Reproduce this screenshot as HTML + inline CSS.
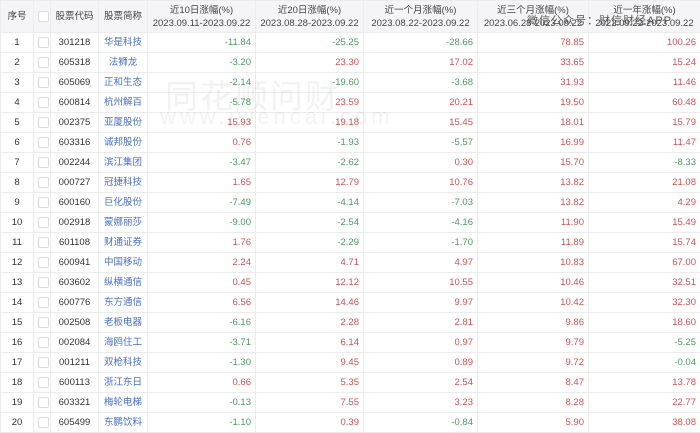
<!DOCTYPE html>
<html><head><meta charset="utf-8"><style>
body{margin:0;width:700px;height:433px;overflow:hidden;background:#fff;font-family:"Liberation Sans","Noto Sans CJK SC",sans-serif;position:relative}
table{border-collapse:collapse;table-layout:fixed;position:absolute;left:0;top:0;width:700px}
td,th{border:1px solid #ececec;font-size:9.5px;padding:0 4px;white-space:nowrap;overflow:hidden;vertical-align:middle}
th{background:#f5f5f7;color:#444;font-weight:normal;height:31px;line-height:13px;text-align:center}
td{height:19px;line-height:19px;color:#333;text-align:right}
td.c{text-align:center}
td.n{color:#4a6fc7;padding:0}
td.n div{height:19px;display:flex;align-items:center;justify-content:center;line-height:1}
.g{color:#4e9a5e}.r{color:#d45050}
.cb{display:inline-block;width:9px;height:9px;border:1px solid #ddd;border-radius:2px;vertical-align:middle;background:#fff}
td:nth-child(4),th:nth-child(4){box-shadow:3px 0 4px -2px rgba(0,0,0,.12)}
.wm{position:absolute;color:rgba(0,0,0,.05);pointer-events:none}
.ov{position:absolute;left:527px;top:12px;font-size:11px;color:#555;letter-spacing:1px}
</style></head><body>
<table>
<colgroup><col style="width:33px"><col style="width:17px"><col style="width:48px"><col style="width:49px"><col style="width:108px"><col style="width:108px"><col style="width:114px"><col style="width:111px"><col style="width:112px"></colgroup>
<tr><th>序号</th><th><span class="cb"></span></th><th>股票代码</th><th>股票简称</th><th>近10日涨幅(%)<br>2023.09.11-2023.09.22</th><th>近20日涨幅(%)<br>2023.08.28-2023.09.22</th><th>近一个月涨幅(%)<br>2023.08.22-2023.09.22</th><th>近三个月涨幅(%)<br>2023.06.28-2023.09.22</th><th>近一年涨幅(%)<br>2022.09.22-2023.09.22</th></tr>
<tr><td class="c">1</td><td class="c"><span class="cb"></span></td><td class="c">301218</td><td class="n"><div>华是科技</div></td><td class="g">-11.84</td><td class="g">-25.25</td><td class="g">-28.66</td><td class="r">78.85</td><td class="r">100.26</td></tr>
<tr><td class="c">2</td><td class="c"><span class="cb"></span></td><td class="c">605318</td><td class="n"><div>法狮龙</div></td><td class="g">-3.20</td><td class="r">23.30</td><td class="r">17.02</td><td class="r">33.65</td><td class="r">15.24</td></tr>
<tr><td class="c">3</td><td class="c"><span class="cb"></span></td><td class="c">605069</td><td class="n"><div>正和生态</div></td><td class="g">-2.14</td><td class="g">-19.60</td><td class="g">-3.68</td><td class="r">31.93</td><td class="r">11.46</td></tr>
<tr><td class="c">4</td><td class="c"><span class="cb"></span></td><td class="c">600814</td><td class="n"><div>杭州解百</div></td><td class="g">-5.78</td><td class="r">23.59</td><td class="r">20.21</td><td class="r">19.50</td><td class="r">60.48</td></tr>
<tr><td class="c">5</td><td class="c"><span class="cb"></span></td><td class="c">002375</td><td class="n"><div>亚厦股份</div></td><td class="r">15.93</td><td class="r">19.18</td><td class="r">15.45</td><td class="r">18.01</td><td class="r">15.79</td></tr>
<tr><td class="c">6</td><td class="c"><span class="cb"></span></td><td class="c">603316</td><td class="n"><div>诚邦股份</div></td><td class="r">0.76</td><td class="g">-1.93</td><td class="g">-5.57</td><td class="r">16.99</td><td class="r">11.47</td></tr>
<tr><td class="c">7</td><td class="c"><span class="cb"></span></td><td class="c">002244</td><td class="n"><div>滨江集团</div></td><td class="g">-3.47</td><td class="g">-2.62</td><td class="r">0.30</td><td class="r">15.70</td><td class="g">-8.33</td></tr>
<tr><td class="c">8</td><td class="c"><span class="cb"></span></td><td class="c">000727</td><td class="n"><div>冠捷科技</div></td><td class="r">1.65</td><td class="r">12.79</td><td class="r">10.76</td><td class="r">13.82</td><td class="r">21.08</td></tr>
<tr><td class="c">9</td><td class="c"><span class="cb"></span></td><td class="c">600160</td><td class="n"><div>巨化股份</div></td><td class="g">-7.49</td><td class="g">-4.14</td><td class="g">-7.03</td><td class="r">13.82</td><td class="r">4.29</td></tr>
<tr><td class="c">10</td><td class="c"><span class="cb"></span></td><td class="c">002918</td><td class="n"><div>蒙娜丽莎</div></td><td class="g">-9.00</td><td class="g">-2.54</td><td class="g">-4.16</td><td class="r">11.90</td><td class="r">15.49</td></tr>
<tr><td class="c">11</td><td class="c"><span class="cb"></span></td><td class="c">601108</td><td class="n"><div>财通证券</div></td><td class="r">1.76</td><td class="g">-2.29</td><td class="g">-1.70</td><td class="r">11.89</td><td class="r">15.74</td></tr>
<tr><td class="c">12</td><td class="c"><span class="cb"></span></td><td class="c">600941</td><td class="n"><div>中国移动</div></td><td class="r">2.24</td><td class="r">4.71</td><td class="r">4.97</td><td class="r">10.83</td><td class="r">67.00</td></tr>
<tr><td class="c">13</td><td class="c"><span class="cb"></span></td><td class="c">603602</td><td class="n"><div>纵横通信</div></td><td class="r">0.45</td><td class="r">12.12</td><td class="r">10.55</td><td class="r">10.46</td><td class="r">32.51</td></tr>
<tr><td class="c">14</td><td class="c"><span class="cb"></span></td><td class="c">600776</td><td class="n"><div>东方通信</div></td><td class="r">6.56</td><td class="r">14.46</td><td class="r">9.97</td><td class="r">10.42</td><td class="r">32.30</td></tr>
<tr><td class="c">15</td><td class="c"><span class="cb"></span></td><td class="c">002508</td><td class="n"><div>老板电器</div></td><td class="g">-6.16</td><td class="r">2.28</td><td class="r">2.81</td><td class="r">9.86</td><td class="r">18.60</td></tr>
<tr><td class="c">16</td><td class="c"><span class="cb"></span></td><td class="c">002084</td><td class="n"><div>海鸥住工</div></td><td class="g">-3.71</td><td class="r">6.14</td><td class="r">0.97</td><td class="r">9.79</td><td class="g">-5.25</td></tr>
<tr><td class="c">17</td><td class="c"><span class="cb"></span></td><td class="c">001211</td><td class="n"><div>双枪科技</div></td><td class="g">-1.30</td><td class="r">9.45</td><td class="r">0.89</td><td class="r">9.72</td><td class="g">-0.04</td></tr>
<tr><td class="c">18</td><td class="c"><span class="cb"></span></td><td class="c">600113</td><td class="n"><div>浙江东日</div></td><td class="r">0.66</td><td class="r">5.35</td><td class="r">2.54</td><td class="r">8.47</td><td class="r">13.78</td></tr>
<tr><td class="c">19</td><td class="c"><span class="cb"></span></td><td class="c">603321</td><td class="n"><div>梅轮电梯</div></td><td class="g">-0.13</td><td class="r">7.55</td><td class="r">3.23</td><td class="r">8.28</td><td class="r">22.77</td></tr>
<tr><td class="c">20</td><td class="c"><span class="cb"></span></td><td class="c">605499</td><td class="n"><div>东鹏饮料</div></td><td class="g">-1.10</td><td class="r">0.39</td><td class="g">-0.84</td><td class="r">5.90</td><td class="r">38.08</td></tr>
</table>
<div class="wm" style="left:165px;top:70px;font-size:33px;letter-spacing:2px">同花顺问财</div>
<div class="wm" style="left:160px;top:104px;font-size:22px;letter-spacing:4px">www.iwencai.com</div>
<div class="ov">微信公众号：财信财经APP</div>
</body></html>
